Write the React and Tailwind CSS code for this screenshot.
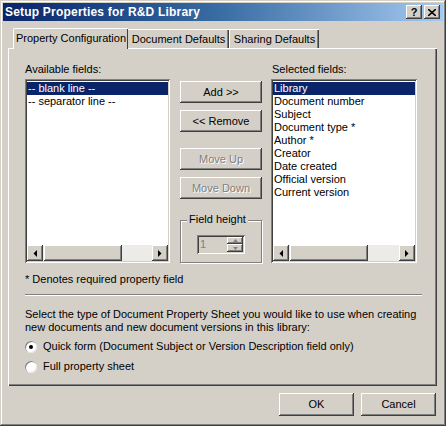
import React from 'react';

const raised =
  'shadow-[inset_-1px_-1px_#404040,inset_1px_1px_#ffffff,inset_-2px_-2px_#808080,inset_2px_2px_#d4d0c8]';
const sunken =
  'shadow-[inset_1px_1px_#808080,inset_-1px_-1px_#ffffff,inset_2px_2px_#404040,inset_-2px_-2px_#d4d0c8]';

const Button = ({ children, disabled, className = '' }) => (
  <div
    className={`flex items-center justify-center bg-[#d4d0c8] ${raised} ${
      disabled ? 'text-[#808080] [text-shadow:1px_1px_0_#ffffff]' : 'text-black'
    } ${className}`}
  >
    {children}
  </div>
);

const Arrow = ({ dir }) => (
  <div className={`w-4 h-4 shrink-0 flex items-center justify-center bg-[#d4d0c8] ${raised}`}>
    <svg width="4" height="7" viewBox="0 0 4 7">
      {dir === 'left' ? (
        <path d="M4 0 L4 7 L0.5 3.5 Z" fill="#000" />
      ) : (
        <path d="M0 0 L0 7 L3.5 3.5 Z" fill="#000" />
      )}
    </svg>
  </div>
);

const ListBox = ({ items, thumb }) => (
  <div className={`w-full h-[184px] bg-white p-[2px] flex flex-col ${sunken}`}>
    <div className="flex-1 flex flex-col pt-[1px]">
      {items.map((item, i) => (
        <div
          key={item}
          className={`h-[13px] leading-[13px] pl-[1px] ${
            i === 0 ? 'bg-[#0a246a] text-white' : 'text-black'
          }`}
        >
          {item}
        </div>
      ))}
    </div>
    <div className="h-4 flex bg-[#ecebe8]">
      <Arrow dir="left" />
      <div className="flex-1 flex">
        <div className={`h-4 bg-[#d4d0c8] ${raised}`} style={{ marginLeft: thumb[0], width: thumb[1] }} />
      </div>
      <Arrow dir="right" />
    </div>
  </div>
);

const Radio = ({ checked, label }) => (
  <div className="flex items-center h-[13px]">
    <div className="w-3 h-3 rounded-full bg-white shadow-[inset_1px_1px_#808080,inset_-1px_-1px_#e8e8e8] flex items-center justify-center">
      {checked && <div className="w-1 h-1 rounded-full bg-black" />}
    </div>
    <span className="ml-[6px]">{label}</span>
  </div>
);

export default function App() {
  const available = ['-- blank line --', '-- separator line --'];
  const selected = [
    'Library',
    'Document number',
    'Subject',
    'Document type *',
    'Author *',
    'Creator',
    'Date created',
    'Official version',
    'Current version',
  ];

  return (
    <div
      className="w-[446px] h-[426px] bg-[#d4d0c8] text-[11px] text-black overflow-hidden shadow-[inset_-1px_-1px_#404040,inset_1px_1px_#d4d0c8,inset_-2px_-2px_#808080,inset_2px_2px_#ffffff] p-[3px]"
      style={{ fontFamily: '"Liberation Sans", Arial, sans-serif' }}
    >
      {/* Title bar */}
      <div className="h-[18px] flex items-center bg-gradient-to-r from-[#0a246a] via-[#3a6ea5] to-[#a6caf0] pl-[2px] pr-[3px]">
        <span className="flex-1 text-white font-bold text-[12px] tracking-[0.2px]">
          Setup Properties for R&amp;D Library
        </span>
        <div className={`w-4 h-[14px] flex items-center justify-center bg-[#d4d0c8] font-bold text-[11px] ${raised}`}>?</div>
        <div className={`w-4 h-[14px] ml-[2px] flex items-center justify-center bg-[#d4d0c8] ${raised}`}>
          <svg width="8" height="7" viewBox="0 0 8 7">
            <path d="M0 0 L8 7 M8 0 L0 7" stroke="#000" strokeWidth="1.6" />
          </svg>
        </div>
      </div>

      {/* Tabs */}
      <div className="flex items-end mt-[6px] pl-[10px] h-[21px]">
        <div className="h-[21px] w-[115px] bg-[#d4d0c8] border-l border-t border-white rounded-tl-[2px] shadow-[inset_-1px_0_#404040] flex items-center justify-center pb-[1px] relative z-10 -mb-[1px]">
          Property Configuration
        </div>
        <div className="h-[19px] w-[101px] border-t border-white shadow-[inset_-1px_0_#404040,inset_-2px_0_#808080] flex items-center justify-center">
          Document Defaults
        </div>
        <div className="h-[19px] w-[90px] border-l border-t border-white shadow-[inset_-1px_0_#404040,inset_-2px_0_#808080] flex items-center justify-center">
          Sharing Defaults
        </div>
      </div>

      {/* Tab panel */}
      <div className="ml-[5px] w-[429px] h-[338px] border-l border-t border-white shadow-[inset_-1px_-1px_#404040,inset_-2px_-2px_#808080] pl-4 pt-[14px]">
        <div className="flex">
          <div className="w-[145px] flex flex-col">
            <div className="h-[13px] leading-[13px] mb-[3px]">Available fields:</div>
            <ListBox items={available} thumb={[1, 78]} />
          </div>

          <div className="w-[82px] ml-[10px] flex flex-col pt-[18px]">
            <Button className="h-[22px]">Add &gt;&gt;</Button>
            <Button className="h-[22px] mt-[7px]">&lt;&lt; Remove</Button>
            <Button className="h-[22px] mt-[16px]" disabled>Move Up</Button>
            <Button className="h-[22px] mt-[7px]" disabled>Move Down</Button>
            <div className="relative mt-[21px] h-[43px] border border-[#808080] shadow-[1px_1px_#ffffff,inset_1px_1px_#ffffff]">
              <span className="absolute -top-[8px] left-[6px] px-[2px] bg-[#d4d0c8] leading-[13px]">Field height</span>
              <div className="absolute left-[16px] top-[14px] w-[48px] h-[19px] flex bg-[#d4d0c8] p-[2px] shadow-[inset_1px_1px_#808080,inset_-1px_-1px_#ffffff,inset_2px_2px_#404040]">
                <span className="flex-1 pl-[1px] text-[#808080] leading-[15px]">1</span>
                <div className="w-[16px] flex flex-col">
                  <div className={`h-[7px] bg-[#d4d0c8] ${raised} flex items-center justify-center`}>
                    <svg width="5" height="3" viewBox="0 0 5 3"><path d="M0 3 L5 3 L2.5 0 Z" fill="#808080" /></svg>
                  </div>
                  <div className={`h-[8px] bg-[#d4d0c8] ${raised} flex items-center justify-center`}>
                    <svg width="5" height="3" viewBox="0 0 5 3"><path d="M0 0 L5 0 L2.5 3 Z" fill="#808080" /></svg>
                  </div>
                </div>
              </div>
            </div>
          </div>

          <div className="w-[146px] ml-[9px] flex flex-col">
            <div className="h-[13px] leading-[13px] mb-[3px] pl-[1px]">Selected fields:</div>
            <ListBox items={selected} thumb={[1, 78]} />
          </div>
        </div>

        <div className="mt-[10px] h-[13px] leading-[13px]">* Denotes required property field</div>

        <div className="mt-[8px] w-[397px] h-[2px] border-t border-[#808080] border-b border-b-white" />

        <div className="mt-[12px] leading-[13px]">
          Select the type of Document Property Sheet you would like to use when creating
          <br />
          new documents and new document versions in this library:
        </div>
        <div className="mt-[6px] flex flex-col gap-[7px]">
          <Radio checked label="Quick form (Document Subject or Version Description field only)" />
          <Radio label="Full property sheet" />
        </div>
      </div>

      {/* Footer buttons */}
      <div className="flex justify-end gap-[7px] mt-[7px] pr-[7px]">
        <Button className="w-[75px] h-[23px] shadow-[inset_-1px_-1px_#000000,inset_1px_1px_#000000,inset_-2px_-2px_#404040,inset_2px_2px_#ffffff,inset_-3px_-3px_#808080]">OK</Button>
        <Button className="w-[75px] h-[23px]">Cancel</Button>
      </div>
    </div>
  );
}
